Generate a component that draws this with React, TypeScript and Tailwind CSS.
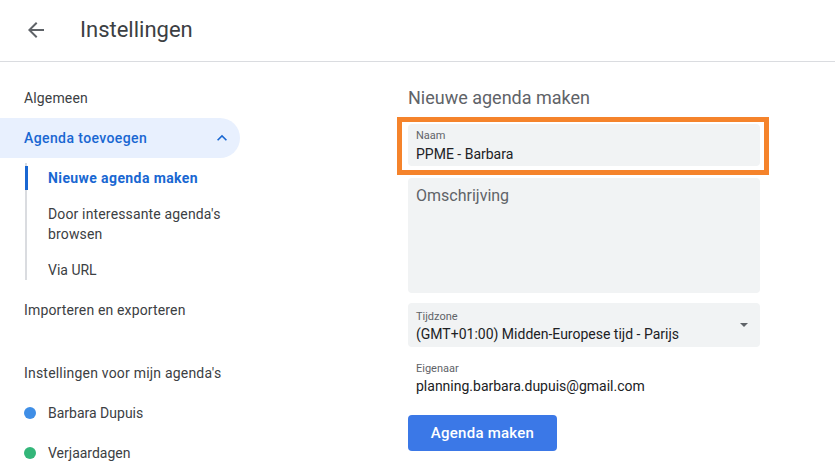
import React from "react";

const font = { fontFamily: "Roboto, 'Liberation Sans', sans-serif" };

function BackArrow() {
  return (
    <svg width="24" height="24" viewBox="0 0 24 24" className="fill-[#5f6368]">
      <path d="M20 11H7.83l5.59-5.59L12 4l-8 8 8 8 1.41-1.41L7.83 13H20v-2z" />
    </svg>
  );
}

function ChevronUp() {
  return (
    <svg width="20" height="20" viewBox="0 0 24 24" className="fill-[#1967d2]">
      <path d="M12 8l-6 6 1.41 1.41L12 10.83l4.59 4.58L18 14z" />
    </svg>
  );
}

function NavRow({ children }: { children: React.ReactNode }) {
  return <div className="flex h-10 items-center pl-6 text-[14px] tracking-[0.15px] text-[#3c4043]">{children}</div>;
}

function CalendarRow({ color, name }: { color: string; name: string }) {
  return (
    <div className="flex h-10 items-center pl-6 text-[14px] text-[#3c4043]">
      <span className={`mr-3 h-3 w-3 rounded-full ${color}`} />
      {name}
    </div>
  );
}

export default function App() {
  return (
    <div className="h-[475px] w-[835px] overflow-hidden bg-white" style={font}>
      <header className="flex h-[62px] items-center border-b border-[#dadce0] pb-[2px]">
        <div className="ml-6 flex h-6 w-6 items-center justify-center">
          <BackArrow />
        </div>
        <h1 className="ml-8 text-[22px] font-normal text-[#3c4043]">Instellingen</h1>
      </header>

      <div className="flex">
        <nav className="w-[408px] shrink-0 pt-[16px]">
          <NavRow>Algemeen</NavRow>
          <div className="flex h-10 w-[240px] items-center justify-between rounded-r-full bg-[#e8f0fe] pl-6 pr-[8px] text-[14px] font-medium tracking-[0.4px] text-[#1967d2]">
            <span>Agenda toevoegen</span>
            <ChevronUp />
          </div>
          <div className="ml-[25px] mt-[5px] border-l-2 border-[#dadce0] pt-[3px] text-[14px] text-[#3c4043]">
            <div className="-ml-[2px] flex h-6 items-center border-l-[3px] border-[#1967d2] pl-[20px] font-bold tracking-[0.4px] text-[#1967d2]">
              Nieuwe agenda maken
            </div>
            <div className="mt-[14px] pl-[21px] leading-5 tracking-[0.15px]">
              Door interessante agenda's
              <br />
              browsen
            </div>
            <div className="mt-[16px] pl-[21px] leading-5">Via URL</div>
          </div>
          <div className="mt-[10px]">
            <NavRow>Importeren en exporteren</NavRow>
          </div>
          <div className="mt-[23px] flex h-10 items-center pl-6 text-[14px] tracking-[0.2px] text-[#3c4043]">
            Instellingen voor mijn agenda's
          </div>
          <CalendarRow color="bg-[#3f8ee6]" name="Barbara Dupuis" />
          <CalendarRow color="bg-[#33b679]" name="Verjaardagen" />
        </nav>

        <main className="w-[352px] pt-[24px]">
          <h2 className="text-[18px] leading-6 text-[#5f6368]">Nieuwe agenda maken</h2>

          <div className="relative mt-[14px]">
            <div className="rounded-[4px] bg-[#f1f3f4] px-2 pb-[2px] pt-[4px]">
              <div className="text-[11px] leading-4 text-[#5f6368]">Naam</div>
              <div className="text-[14px] leading-5 text-[#202124]">PPME - Barbara</div>
            </div>
            <div className="pointer-events-none absolute -bottom-[9px] -left-[11px] -right-[9px] -top-[7px] border-[5px] border-[#f5832b]" />
          </div>

          <div className="mt-[12px] h-[115px] rounded-[4px] bg-[#f1f3f4] px-2 pt-[6px] text-[16px] leading-6 text-[#5f6368]">
            Omschrijving
          </div>

          <div className="mt-[10px] flex h-[44px] items-start justify-between rounded-[4px] bg-[#f1f3f4] px-2 pt-[7px]">
            <div>
              <div className="text-[11px] leading-[14px] text-[#5f6368]">Tijdzone</div>
              <div className="text-[14px] leading-5 text-[#202124]">(GMT+01:00) Midden-Europese tijd - Parijs</div>
            </div>
            <svg width="8" height="4" viewBox="0 0 10 5" className="mr-[4px] mt-[13px] fill-[#5f6368]">
              <path d="M0 0l5 5 5-5z" />
            </svg>
          </div>

          <div className="mt-[15px] px-2">
            <div className="text-[11px] leading-[14px] text-[#5f6368]">Eigenaar</div>
            <div className="text-[14px] leading-5 text-[#202124]">planning.barbara.dupuis@gmail.com</div>
          </div>

          <button className="mt-[19px] h-9 w-[149px] rounded-[4px] bg-[#3b78e7] text-[15px] font-medium tracking-[0.25px] text-white">
            Agenda maken
          </button>
        </main>
      </div>
    </div>
  );
}
